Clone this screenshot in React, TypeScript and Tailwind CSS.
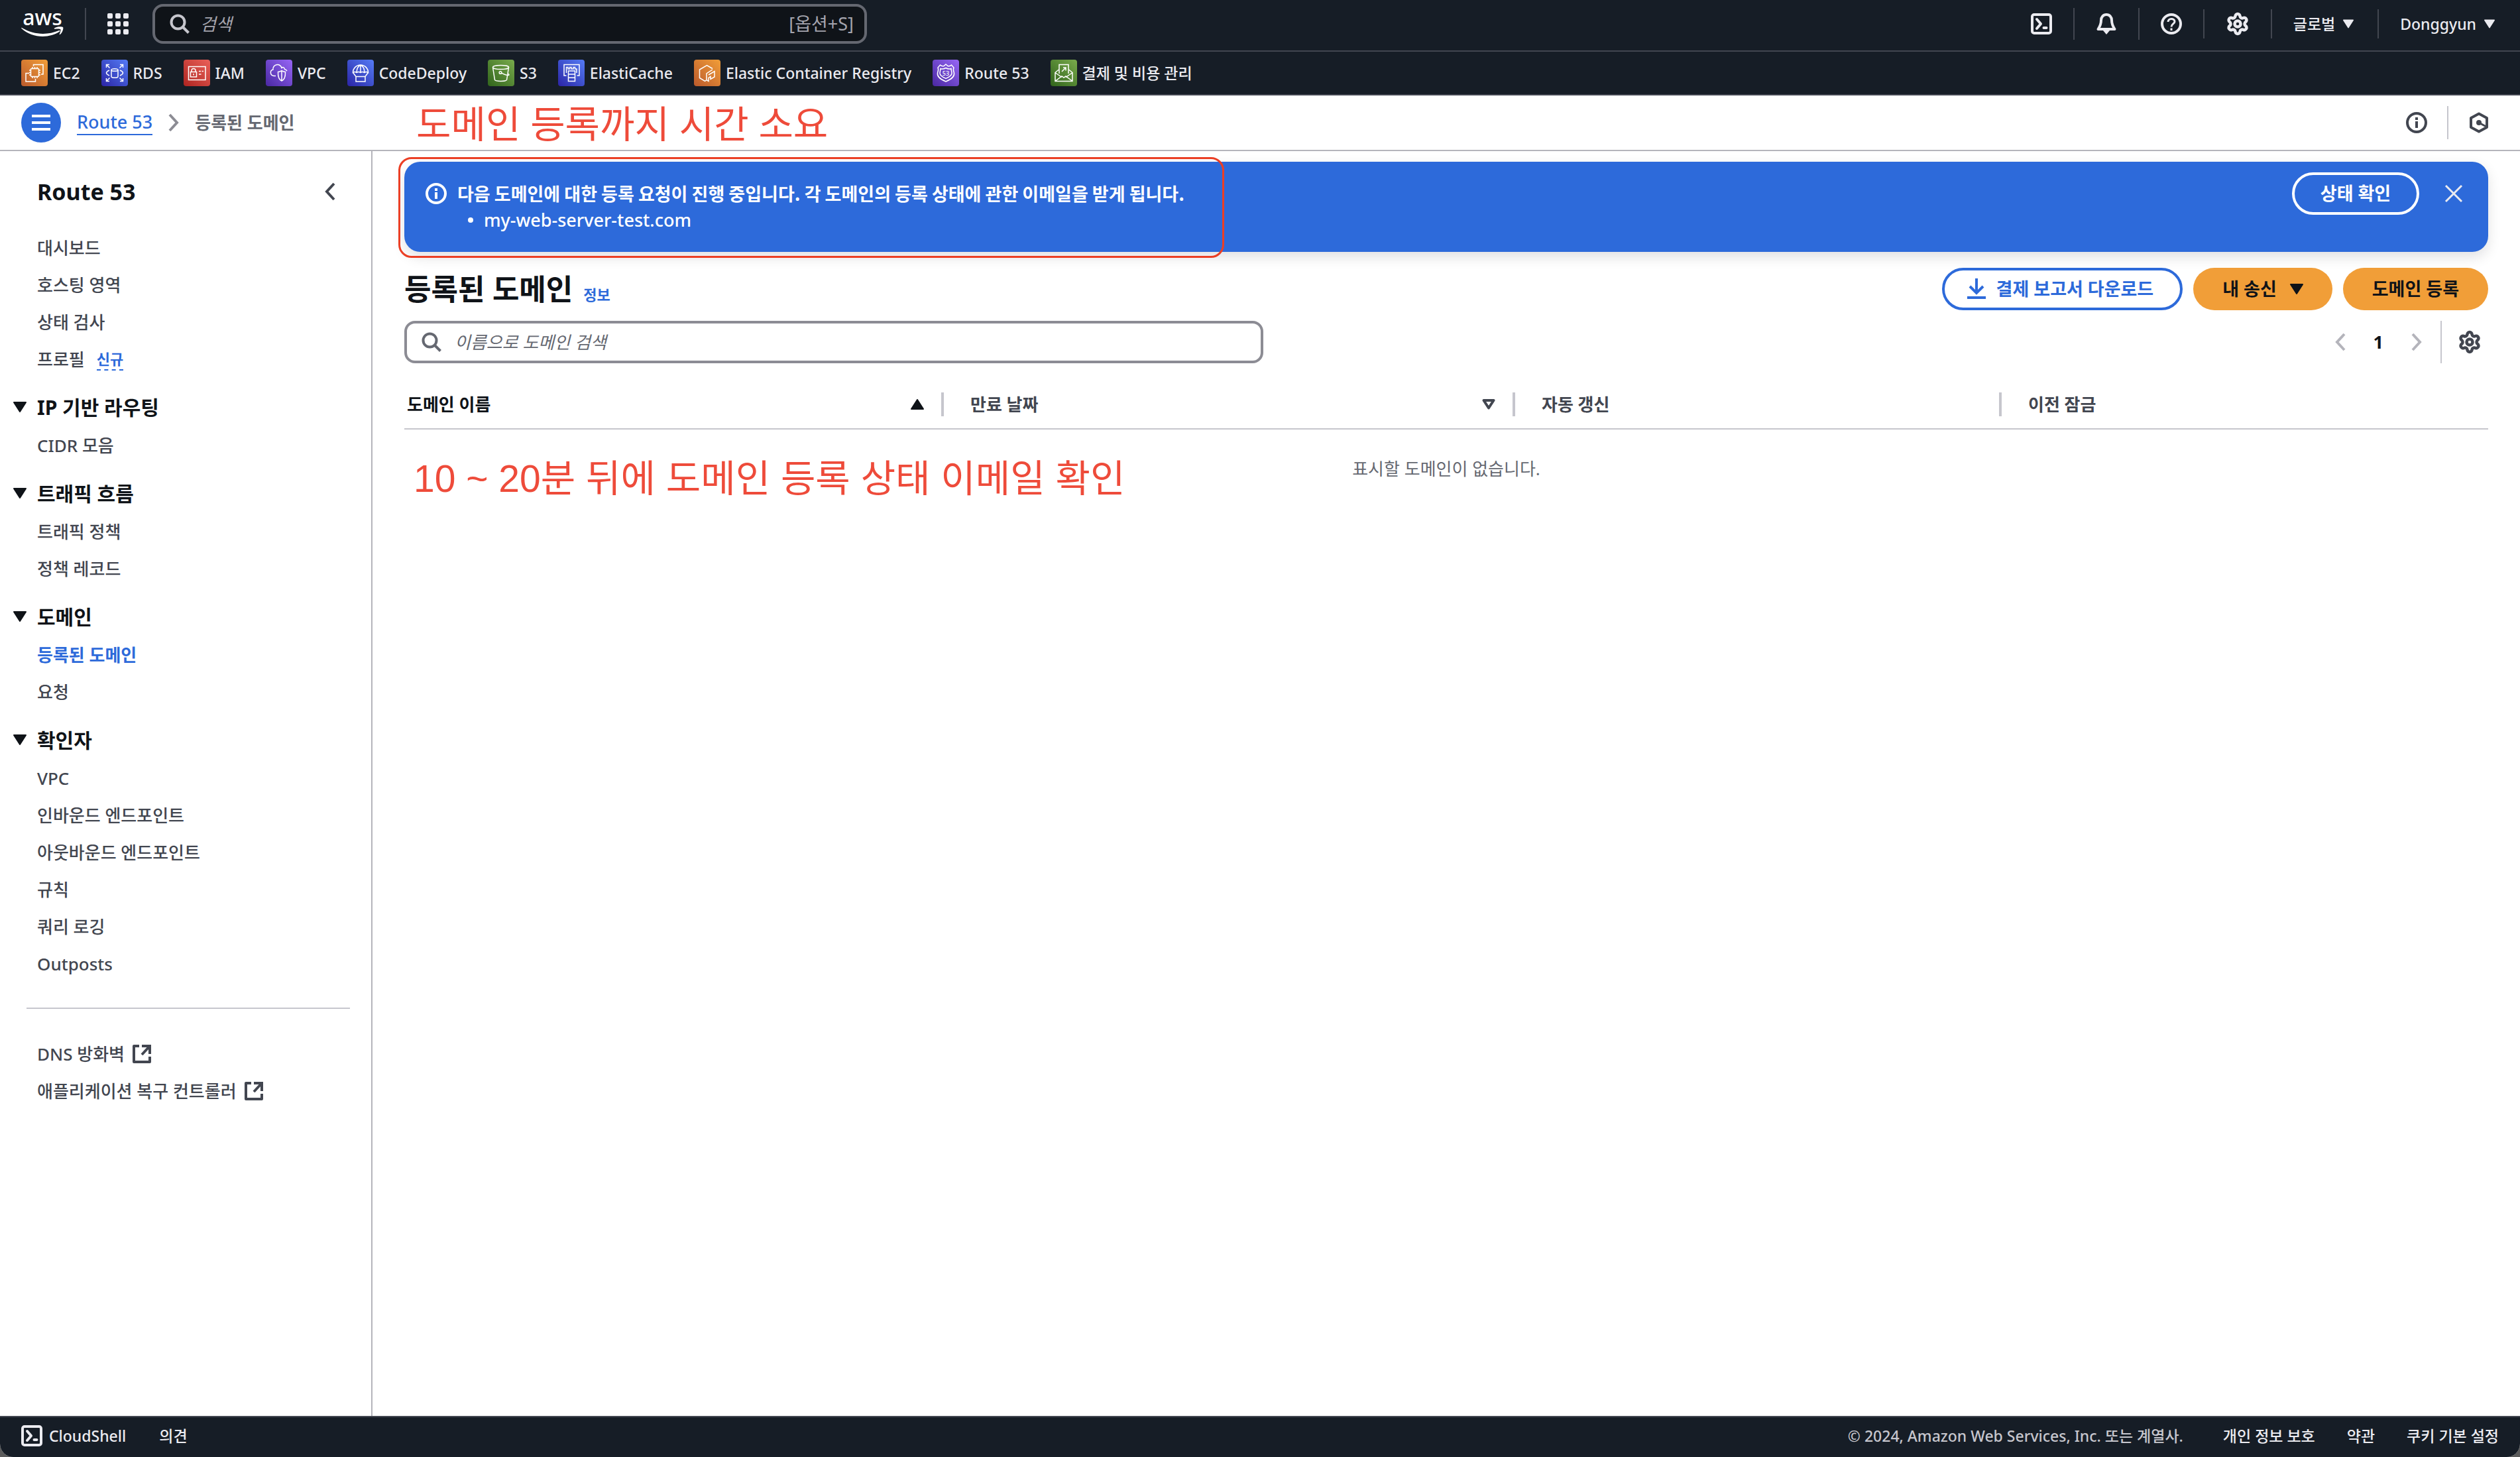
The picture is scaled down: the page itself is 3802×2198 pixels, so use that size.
import { ReactNode } from 'react'
import { Settings } from 'lucide-react'

interface Service {
  name: string
  tile: string
  icon: ReactNode
}

interface NavEntry {
  label: string
  active?: boolean
  badge?: string
}

interface NavGroup {
  title: string
  items: NavEntry[]
}

const ORANGE = 'from-[#bb5a2c] to-[#f19e38]'
const BLUE = 'from-[#2c22a6] to-[#567bf5]'
const RED = 'from-[#ae2320] to-[#ea6059]'
const PURPLE = 'from-[#4a27a2] to-[#9866f6]'
const GREEN = 'from-[#31651c] to-[#79ab4c]'

const SERVICES: Service[] = [
  {
    name: 'EC2',
    tile: ORANGE,
    icon: (
      <>
        <rect x="14.500" y="13.500" width="12" height="12" rx="1" />
        <path d="M17 11v2.500M20.500 11v2.500M24 11v2.500M17 25.500V28M20.500 25.500V28M24 25.500V28M12 16h2.500M12 19.500h2.500M12 23h2.500M26.500 16H29M26.500 19.500H29M26.500 23H29" />
        <path d="M18.500 10V7.500h14.500v14.500h-3M12 20.500H7V33h14.500v-4" />
      </>
    ),
  },
  {
    name: 'RDS',
    tile: BLUE,
    icon: (
      <>
        <ellipse cx="20" cy="15.500" rx="5" ry="1.800" />
        <path d="M15 15.500v10c0 2.400 10 2.400 10 0v-10" />
        <path d="M7.500 12V7.500H12M7.500 7.500l5 5M28 7.500h4.500V12M32.500 7.500l-5 5M7.500 28v4.500H12M7.500 32.500l5-5M28 32.500h4.500V28M32.500 32.500l-5-5" />
        <path d="M12 16c-2 1-4.500 2-4.500 4s2.500 3 4.500 4M28 16c2 1 4.500 2 4.500 4s-2.500 3-4.500 4" />
      </>
    ),
  },
  {
    name: 'IAM',
    tile: RED,
    icon: (
      <>
        <rect x="7.500" y="10.500" width="25.500" height="20" />
        <rect x="10.500" y="18.500" width="9" height="7.500" />
        <path d="M12 18.500v-2a3 3 0 0 1 6 0v2M15 21v2.500M23 17.500h3M27.500 17.500H30M23 22h3.500" />
      </>
    ),
  },
  {
    name: 'VPC',
    tile: PURPLE,
    icon: (
      <>
        <path d="M15 24.500h-3c-6-1-6-8.500-1-9.500-.5-4 2-7 6-7.500 4-.300 6 2 7 5 1.500-2 4-1 4.500 2 1.500 0 2.500 1 3.500 2.500" />
        <path d="M18.500 18.500c3 0 4-1 5.500-2 1.500 1 2.500 2 5.500 2 .300 7-1 11.500-5.500 13.500-4.500-2-5.800-6.500-5.500-13.500zM24 16.500V32" />
      </>
    ),
  },
  {
    name: 'CodeDeploy',
    tile: BLUE,
    icon: (
      <>
        <path d="M8.500 19.500a11.500 11.500 0 0 1 23 0c-2-1.300-4-1.300-5.700 0-2-1.300-4-1.300-5.800 0-2-1.300-4-1.300-5.800 0-2-1.300-3.800-1.300-5.700 0zM20 8v11.500M20 8c-4 2-6 6-5.800 11.500M20 8c4 2 6 6 5.800 11.500" />
        <path d="M9 20l4 5.500h14l4-5.500M13 25.500V33h14v-7.500" />
      </>
    ),
  },
  {
    name: 'S3',
    tile: GREEN,
    icon: (
      <>
        <ellipse cx="19.500" cy="11.500" rx="12" ry="3" />
        <path d="M7.500 11.500l3 19c1 2.500 17 2.500 18 0l3-19" />
        <circle cx="19" cy="19.500" r="1.800" />
        <path d="M20.500 20.200c4 2 8 3.500 10.500 3.300 1.500-.300 1-1.500-.500-2.500" />
      </>
    ),
  },
  {
    name: 'ElastiCache',
    tile: BLUE,
    icon: (
      <>
        <path d="M12.500 24h-3.500V7.500h23V24h-3.500" />
        <path d="M12.500 20v-8.500h2.500V14h2.500v-2.500h2.500V14H23v-2.500h2.500V14h2.500V20" />
        <path d="M15.500 17h10v15.500h-10zM15.500 22h10M15.500 27.300h10" />
      </>
    ),
  },
  {
    name: 'Elastic Container Registry',
    tile: ORANGE,
    icon: (
      <>
        <path d="M28 13.500l-8.500-5-11 6.500v12.500l8 4.800 2.500-1.500V21l9-6" />
        <path d="M22 23l9-5.500v8.500L25 29.500v-4l-3 2v5l-2.500-1.500" />
      </>
    ),
  },
  {
    name: 'Route 53',
    tile: PURPLE,
    icon: (
      <>
        <path d="M20 7l3 2.500c2 .500 4 0 5.500-1.500l3.500 4c-1.500 3-.500 5 .500 8 1 6-5 10-12.500 13C12.500 30 6.500 26 7.500 20c1-3 2-5 .500-8l3.500-4c1.500 1.500 3.500 2 5.500 1.500z" />
        <path d="M12 13.500c2.500 1 5.500.500 8-1 2.500 1.500 5.500 2 8 1 0 3 1 4 1 7 0 4-5 6-9 8-4-2-9-4-9-8 0-3 1-4 1-7z" />
        <text x="20" y="23.500" textAnchor="middle" fontSize="9" fill="white" stroke="none">
          53
        </text>
      </>
    ),
  },
  {
    name: '결제 및 비용 관리',
    tile: GREEN,
    icon: (
      <>
        <path d="M13 21V7.500h14V21" />
        <path d="M17 18l6-6M19 12h4v4.500" />
        <path d="M12.500 15L7 19.500v13h26v-13L27.500 15M7.500 20l9.500 6.500M32.500 20L23 26.500M7.500 32l9.500-7 3 2 3-2 9.500 7" />
      </>
    ),
  },
]

const TOP_LINKS: NavEntry[] = [
  { label: '대시보드' },
  { label: '호스팅 영역' },
  { label: '상태 검사' },
  { label: '프로필', badge: '신규' },
]

const NAV_GROUPS: NavGroup[] = [
  { title: 'IP 기반 라우팅', items: [{ label: 'CIDR 모음' }] },
  { title: '트래픽 흐름', items: [{ label: '트래픽 정책' }, { label: '정책 레코드' }] },
  { title: '도메인', items: [{ label: '등록된 도메인', active: true }, { label: '요청' }] },
  {
    title: '확인자',
    items: [
      { label: 'VPC' },
      { label: '인바운드 엔드포인트' },
      { label: '아웃바운드 엔드포인트' },
      { label: '규칙' },
      { label: '쿼리 로깅' },
      { label: 'Outposts' },
    ],
  },
]

const EXTERNAL_LINKS = ['DNS 방화벽', '애플리케이션 복구 컨트롤러']

function Caret({ className = '', up = false }: { className?: string; up?: boolean }) {
  return (
    <svg viewBox="0 0 20 16" className={className} aria-hidden="true">
      <path
        d={up ? 'M10 1L19 15H1z' : 'M10 15L19 1H1z'}
        fill="currentColor"
        stroke="currentColor"
        strokeWidth="2"
        strokeLinejoin="round"
      />
    </svg>
  )
}

function Chevron({ className = '', left = false }: { className?: string; left?: boolean }) {
  return (
    <svg viewBox="0 0 16 28" className={className} fill="none" stroke="currentColor" strokeWidth="4" aria-hidden="true">
      <path d={left ? 'M14 2L3 14l11 12' : 'M2 2l11 12L2 26'} />
    </svg>
  )
}

function SearchIcon({ className = '' }: { className?: string }) {
  return (
    <svg viewBox="0 0 30 30" className={className} fill="none" stroke="currentColor" strokeWidth="4" aria-hidden="true">
      <circle cx="12.500" cy="12.500" r="10" />
      <path d="M19.500 19.500l9 9" />
    </svg>
  )
}

function InfoIcon({ className = '' }: { className?: string }) {
  return (
    <svg viewBox="0 0 32 32" className={className} fill="none" stroke="currentColor" strokeWidth="4" aria-hidden="true">
      <circle cx="16" cy="16" r="14" />
      <path d="M16 14v10M16 8v4" />
    </svg>
  )
}

function ShellIcon({ className = '' }: { className?: string }) {
  return (
    <svg viewBox="0 0 32 32" className={className} fill="none" stroke="currentColor" strokeWidth="4" aria-hidden="true">
      <rect x="2" y="2" width="28" height="28" rx="3" />
      <path d="M9 9l6 7-6 7" strokeLinecap="round" strokeLinejoin="round" />
      <path d="M19.500 22h4" strokeLinecap="round" />
    </svg>
  )
}

function BellIcon() {
  return (
    <svg viewBox="0 0 32 32" className="size-8" fill="none" stroke="currentColor" strokeWidth="4" aria-hidden="true">
      <path d="M16 2c-5 0-8 4-8 8.500 0 6-1.500 9-4.500 13.500h25C25.500 19.500 24 16.500 24 10.500 24 6 21 2 16 2z" strokeLinejoin="round" />
      <path d="M11 26h10l-5 6z" fill="currentColor" stroke="none" />
    </svg>
  )
}

function HelpIcon() {
  return (
    <svg viewBox="0 0 32 32" className="size-8" fill="none" stroke="currentColor" strokeWidth="4" aria-hidden="true">
      <circle cx="16" cy="16" r="14" />
      <path d="M11 13c0-6 10-6 10-.500 0 3.500-5 3.500-5 8M16 22.500v3.500" strokeWidth="3" />
    </svg>
  )
}

function HexIcon() {
  return (
    <svg viewBox="0 0 32 32" className="size-8" fill="none" stroke="currentColor" strokeWidth="4" aria-hidden="true">
      <path d="M16 2.500l12 6.500v14l-12 6.500L4 23V9z" strokeLinejoin="round" />
      <circle cx="16" cy="16" r="4" fill="currentColor" stroke="none" />
      <path d="M16 16l10 5.500" strokeWidth="3" />
    </svg>
  )
}

function ExternalIcon() {
  return (
    <svg viewBox="0 0 28 28" className="size-7" fill="none" stroke="currentColor" strokeWidth="4" aria-hidden="true">
      <path d="M10 2H2v24h24v-8" strokeLinejoin="round" />
      <path d="M14 2h12v12M26 2L14 15" />
    </svg>
  )
}

function AwsLogo() {
  return (
    <a href="#home" aria-label="AWS" className="flex w-16 flex-col items-center text-white">
      <span className="h-6 text-[32px] leading-5 font-medium">aws</span>
      <svg viewBox="0 0 64 16" className="h-4 w-16" fill="currentColor" aria-hidden="true">
        <path d="M1 2c18 10.500 38 11.500 56 4 1.500-.500 2 .500 1 1.500C42 18.500 16 17.500.500 3 0 2 .300 1.500 1 2z" />
        <path d="M50 2.500c4-3 12-2.500 13-1.500 1.200 1.500-1 9-4.500 11-.800.500-1 0-.700-.800 1-2.500 2.200-5.700 1.500-7-.800-1-5-.800-8.500-.500-1.200 0-1.500-.600-.800-1.200z" />
      </svg>
    </a>
  )
}

function GlobalHeader() {
  return (
    <header className="bg-[#161d26] text-[#ebebf0]">
      <div className="flex h-[78px] items-center border-b-2 border-[#424650] pr-[38px] pb-1 pl-8">
        <AwsLogo />
        <span className="ml-8 h-12 w-0.5 bg-[#424650]" />
        <button type="button" aria-label="서비스" className="ml-8 grid size-8 grid-cols-3 gap-1">
          {Array.from({ length: 9 }, (_, i) => (
            <span key={i} className="size-2 rounded-xs bg-[#ebebf0]" />
          ))}
        </button>
        <label className="ml-9 flex h-[60px] w-[1078px] items-center rounded-2xl border-4 border-[#656871] bg-[#0f1318] pr-4 pl-[22px]">
          <SearchIcon className="size-[30px] text-[#c6c6cd]" />
          <input
            type="search"
            aria-label="검색"
            placeholder="검색"
            className="ml-4 min-w-0 flex-1 bg-transparent text-[26px] outline-none placeholder:text-[#a4a4ad] placeholder:italic"
          />
          <span className="text-[27px] text-[#a4a4ad]">[옵션+S]</span>
        </label>
        <div className="ml-auto flex items-center">
          <button type="button" aria-label="CloudShell" className="pr-8">
            <ShellIcon className="size-8" />
          </button>
          <span className="h-12 w-0.5 bg-[#424650]" />
          <button type="button" aria-label="알림" className="px-8">
            <BellIcon />
          </button>
          <span className="h-12 w-0.5 bg-[#424650]" />
          <button type="button" aria-label="도움말" className="px-8">
            <HelpIcon />
          </button>
          <span className="h-11 w-0.5 bg-[#424650]" />
          <button type="button" aria-label="설정" className="px-8">
            <Settings className="size-9" strokeWidth={3} />
          </button>
          <span className="h-11 w-0.5 bg-[#424650]" />
          <button type="button" className="flex items-center gap-3 pr-9 pl-8 text-[23px] font-medium">
            글로벌
            <Caret className="h-[14px] w-4" />
          </button>
          <span className="h-11 w-0.5 bg-[#424650]" />
          <button type="button" className="flex items-center gap-3 pl-8 text-[23px] font-medium">
            Donggyun
            <Caret className="h-[14px] w-4" />
          </button>
        </div>
      </div>
      <nav className="flex h-[66px] items-center gap-8 border-b-2 border-[#424650] pl-8">
        {SERVICES.map((s) => (
          <a key={s.name} href="#service" className="flex items-center gap-2 text-[23px] font-medium">
            <span className={`size-10 rounded-sm bg-linear-to-tr ${s.tile}`}>
              <svg viewBox="0 0 40 40" className="size-10" fill="none" stroke="white" strokeWidth="1.500" aria-hidden="true">
                {s.icon}
              </svg>
            </span>
            {s.name}
          </a>
        ))}
      </nav>
    </header>
  )
}

function BreadcrumbBar() {
  return (
    <div className="relative flex h-[84px] items-center border-b-2 border-[#b4b4bb] pr-[46px] pl-8">
      <button
        type="button"
        aria-label="메뉴"
        className="flex size-[60px] flex-col items-center justify-center gap-1.5 rounded-full bg-[#2d6ada]"
      >
        <span className="h-1 w-7 bg-white" />
        <span className="h-1 w-7 bg-white" />
        <span className="h-1 w-7 bg-white" />
      </button>
      <a href="#route53" className="ml-6 border-b-2 border-[#2d6ada] text-[27px] leading-9 font-medium text-[#2d6ada]">
        Route 53
      </a>
      <Chevron className="ml-6 h-7 w-4 text-[#8c8c94]" />
      <span className="ml-6 text-[26px] font-bold text-[#656871]">등록된 도메인</span>
      <div className="ml-auto flex items-center text-[#424650]">
        <button type="button" aria-label="정보">
          <InfoIcon className="size-8" />
        </button>
        <span className="mx-[30px] h-[50px] w-0.5 bg-[#c6c6cd]" />
        <button type="button" aria-label="Amazon Q">
          <HexIcon />
        </button>
      </div>
      <p className="absolute top-0 left-[628px] text-[57px] leading-[84px] text-[#ee4b3a]">
        도메인 등록까지 시간 소요
      </p>
    </div>
  )
}

function NavItem({ label, active, badge }: NavEntry) {
  return (
    <li className="flex h-14 items-center gap-[18px] pl-14 text-[26px]">
      <a href="#nav" className={active ? 'font-bold text-[#2d6ada]' : 'font-medium text-[#424650]'}>
        {label}
      </a>
      {badge && (
        <button type="button" className="border-b-2 border-dashed border-[#2d6ada] text-[22px] leading-8 font-bold text-[#2d6ada]">
          {badge}
        </button>
      )}
    </li>
  )
}

function SideNav() {
  return (
    <aside className="w-[562px] shrink-0 border-r-2 border-[#b4b4bb]">
      <div className="flex h-[118px] items-center justify-between pt-1 pr-[54px] pl-14">
        <h2 className="text-[34px] font-bold text-[#0f1318]">Route 53</h2>
        <button type="button" aria-label="탐색 닫기">
          <Chevron left className="h-7 w-4 text-[#424650]" />
        </button>
      </div>
      <ul>
        {TOP_LINKS.map((item) => <NavItem key={item.label} {...item} />)}
      </ul>
      {NAV_GROUPS.map((g) => (
        <section key={g.title} className="mt-[14px]">
          <button type="button" className="flex h-[60px] items-center gap-4 pl-5 text-[30px] font-bold text-[#0f1318]">
            <Caret className="h-4 w-5" />
            {g.title}
          </button>
          <ul>
            {g.items.map((item) => <NavItem key={item.label} {...item} />)}
          </ul>
        </section>
      ))}
      <hr className="mt-[38px] mr-8 ml-10 border-t-2 border-[#c6c6cd]" />
      <ul className="mt-10">
        {EXTERNAL_LINKS.map((label) => (
          <li key={label} className="h-14 pl-14 text-[26px] font-medium text-[#424650]">
            <a href="#external" className="flex h-14 items-center gap-3">
              {label}
              <ExternalIcon />
            </a>
          </li>
        ))}
      </ul>
    </aside>
  )
}

function Banner() {
  return (
    <section className="relative flex h-[136px] items-start rounded-3xl bg-[#2d6ada] pt-4 pr-[38px] pl-8 text-white shadow-[0_8px_20px_rgba(0,7,22,0.12)]">
      <InfoIcon className="mt-4 size-8" />
      <div className="ml-4 pt-3">
        <p className="font-['Noto_Sans_CJK_KR',sans-serif] text-[27px] leading-10 font-bold">
          다음 도메인에 대한 등록 요청이 진행 중입니다. 각 도메인의 등록 상태에 관한 이메일을 받게 됩니다.
        </p>
        <ul className="pl-4 text-[27px] leading-10 font-medium">
          <li className="flex items-center gap-4">
            <span className="size-2 rounded-full bg-white" />
            my-web-server-test.com
          </li>
        </ul>
      </div>
      <button type="button" className="ml-auto h-16 w-48 rounded-full border-4 border-white text-[27px] font-bold">
        상태 확인
      </button>
      <button type="button" aria-label="닫기" className="mt-[18px] ml-[38px]">
        <svg viewBox="0 0 28 28" className="size-7" stroke="#ebebf0" strokeWidth="3" aria-hidden="true">
          <path d="M2 2l24 24M26 2L2 26" />
        </svg>
      </button>
      {/* hand-drawn highlight around the notice */}
      <span className="pointer-events-none absolute -top-[7px] -left-[9px] h-[152px] w-[1246px] rounded-[20px] border-3 border-[#eb3f25]" />
    </section>
  )
}

function DomainsTable() {
  return (
    <table className="w-full table-fixed border-separate border-spacing-0 text-left text-[26px]">
      <colgroup>
        <col className="w-[814px]" />
        <col className="w-[862px]" />
        <col className="w-[734px]" />
        <col />
      </colgroup>
      <thead className="text-[#424650]">
        <tr>
          <th scope="col" className="border-b-2 border-[#c6c6cd] pt-11 pb-[18px]">
            <button
              type="button"
              className="flex h-9 w-full items-center justify-between border-r-4 border-[#c6c6cd] pr-[26px] pl-1 font-bold text-[#0f1318]"
            >
              도메인 이름
              <Caret up className="h-4 w-5" />
            </button>
          </th>
          <th scope="col" className="border-b-2 border-[#c6c6cd] pt-11 pb-[18px]">
            <button
              type="button"
              className="flex h-9 w-full items-center justify-between border-r-4 border-[#c6c6cd] pr-[26px] pl-10 font-bold"
            >
              만료 날짜
              <svg viewBox="0 0 20 16" className="h-4 w-5" fill="none" aria-hidden="true">
                <path d="M10 13.500L17.500 2h-15z" stroke="currentColor" strokeWidth="4" strokeLinejoin="round" />
              </svg>
            </button>
          </th>
          <th scope="col" className="border-b-2 border-[#c6c6cd] pt-11 pb-[18px] font-bold">
            <div className="flex h-9 items-center border-r-4 border-[#c6c6cd] pl-10">자동 갱신</div>
          </th>
          <th scope="col" className="border-b-2 border-[#c6c6cd] pt-11 pb-[18px] font-bold">
            <div className="flex h-9 items-center pl-10">이전 잠금</div>
          </th>
        </tr>
      </thead>
      <tbody>
        <tr>
          <td colSpan={4} className="h-[118px] text-center text-[#656871]">
            표시할 도메인이 없습니다.
          </td>
        </tr>
      </tbody>
    </table>
  )
}

function DomainsPage() {
  return (
    <main className="min-w-0 flex-1 px-12 pt-4">
      <Banner />
      <div className="mt-6 flex h-16 items-center gap-4 text-[27px] font-bold">
        <h1 className="text-[44px] text-[#0f1318]">등록된 도메인</h1>
        <a href="#info" className="pt-4 text-[22px] text-[#2d6ada]">정보</a>
        <button
          type="button"
          className="ml-auto flex h-16 items-center gap-4 rounded-full border-4 border-[#2d6ada] pr-10 pl-[34px] text-[#2d6ada]"
        >
          <svg viewBox="0 0 28 32" className="h-8 w-7" fill="none" stroke="currentColor" strokeWidth="4" aria-hidden="true">
            <path d="M14 0v21M4 12l10 10 10-10M0 29h28" />
          </svg>
          결제 보고서 다운로드
        </button>
        <button type="button" className="flex h-16 items-center gap-5 rounded-full bg-[#f19e38] px-11 text-[#0f1318]">
          내 송신
          <Caret className="h-4 w-5" />
        </button>
        <button type="button" className="h-16 rounded-full bg-[#f19e38] px-11 text-[#0f1318]">
          도메인 등록
        </button>
      </div>
      <div className="mt-4 flex h-16 items-center justify-between">
        <label className="flex h-16 w-[1296px] items-center rounded-2xl border-4 border-[#8c8c94] px-[22px]">
          <SearchIcon className="size-[30px] text-[#656871]" />
          <input
            type="search"
            aria-label="이름으로 도메인 검색"
            placeholder="이름으로 도메인 검색"
            className="ml-5 min-w-0 flex-1 bg-transparent text-[26px] outline-none placeholder:text-[#656871] placeholder:italic"
          />
        </label>
        <div className="flex items-center pr-2.5">
          <button type="button" aria-label="이전 페이지">
            <Chevron left className="h-7 w-4 text-[#b4b4bb]" />
          </button>
          <button type="button" className="mx-[42px] text-[27px] font-bold text-[#0f1318]">1</button>
          <button type="button" aria-label="다음 페이지">
            <Chevron className="h-7 w-4 text-[#b4b4bb]" />
          </button>
          <span className="mr-6 ml-7 h-16 w-0.5 bg-[#c6c6cd]" />
          <button type="button" aria-label="기본 설정">
            <Settings className="size-9 text-[#424650]" strokeWidth={3} />
          </button>
        </div>
      </div>
      <div className="relative">
        <DomainsTable />
        <p className="absolute top-[132px] left-[14px] font-['Liberation_Sans','Noto_Sans_CJK_KR',sans-serif] text-[57px] leading-[84px] text-[#ee4b3a]">
          10 ~ 20분 뒤에 도메인 등록 상태 이메일 확인
        </p>
      </div>
    </main>
  )
}

function Footer() {
  return (
    <footer className="flex h-[62px] items-center border-t-2 border-[#424650] bg-[#161d26] px-8 pb-1 text-[23px] font-medium text-[#ebebf0]">
      <button type="button" className="flex items-center gap-2.5">
        <ShellIcon className="size-8" />
        CloudShell
      </button>
      <a href="#feedback" className="ml-[50px]">의견</a>
      <span className="ml-auto text-[#c6c6cd]">© 2024, Amazon Web Services, Inc. 또는 계열사.</span>
      <a href="#privacy" className="ml-[60px]">개인 정보 보호</a>
      <a href="#terms" className="ml-12">약관</a>
      <a href="#cookies" className="ml-12">쿠키 기본 설정</a>
    </footer>
  )
}

export default function App() {
  return (
    <div className="bg-[#5b5b5b]">
      <div className="flex min-h-screen flex-col overflow-hidden rounded-b-[20px] bg-white font-['Noto_Sans','Noto_Sans_CJK_KR',sans-serif]">
        <GlobalHeader />
        <BreadcrumbBar />
        <div className="flex flex-1">
          <SideNav />
          <DomainsPage />
        </div>
        <Footer />
      </div>
    </div>
  )
}
